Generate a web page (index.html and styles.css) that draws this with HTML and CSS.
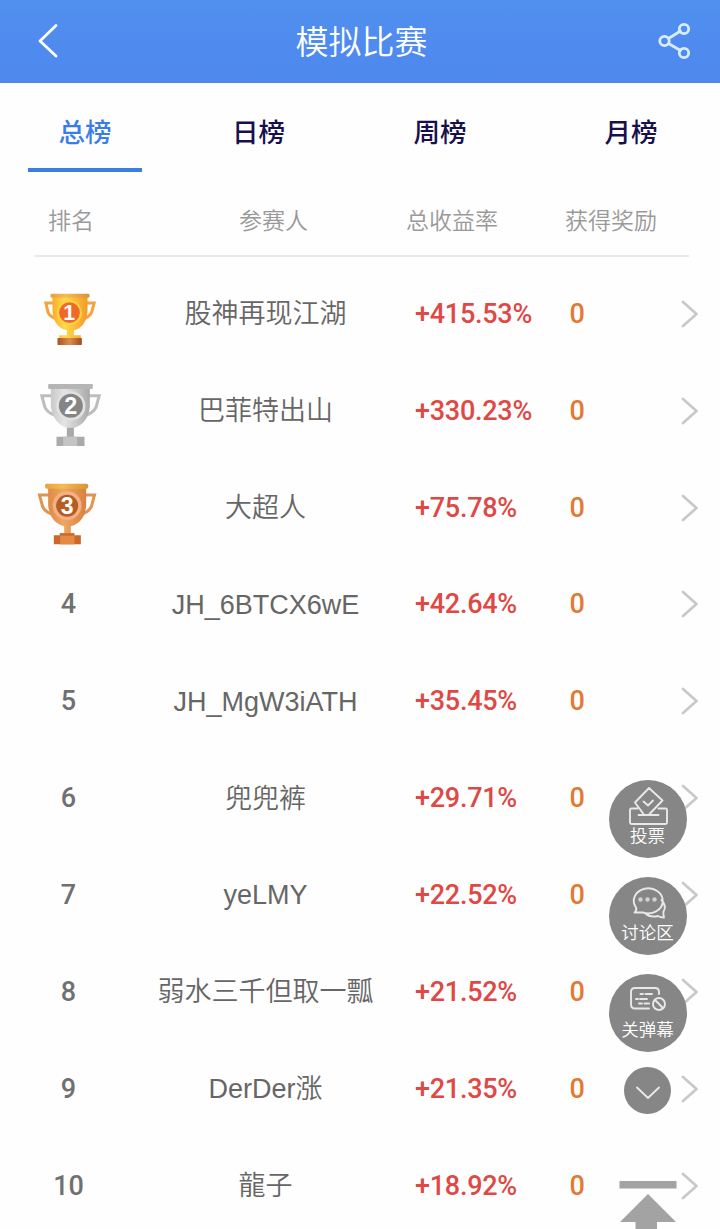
FILE: index.html
```html
<!DOCTYPE html>
<html lang="zh-CN">
<head>
<meta charset="utf-8">
<title>模拟比赛</title>
<link rel="stylesheet" href="styles.css">
</head>
<body>
<svg class="defs" width="0" height="0" aria-hidden="true">
  <defs>
    <linearGradient id="gold" x1="0" x2="1"><stop offset="0" stop-color="#f9ad2b"/><stop offset=".35" stop-color="#ffd94f"/><stop offset="1" stop-color="#f59a25"/></linearGradient>
    <linearGradient id="silver" x1="0" x2="1"><stop offset="0" stop-color="#c9c9c9"/><stop offset=".35" stop-color="#e4e4e4"/><stop offset="1" stop-color="#a9a9a9"/></linearGradient>
    <linearGradient id="bronze" x1="0" x2="1"><stop offset="0" stop-color="#dd8a45"/><stop offset=".4" stop-color="#eea761"/><stop offset="1" stop-color="#d6813f"/></linearGradient>
    <linearGradient id="goldbase" x1="0" x2="1"><stop offset="0" stop-color="#a8541f"/><stop offset=".5" stop-color="#dc8d50"/><stop offset="1" stop-color="#a04a1a"/></linearGradient>
    <linearGradient id="rim" x1="0" x2="1"><stop offset="0" stop-color="#e9a03a"/><stop offset=".4" stop-color="#f3bd52"/><stop offset="1" stop-color="#dc9230"/></linearGradient>
    <symbol id="chevron" viewBox="0 0 18 28"><path d="M2 2 15.500 14 2 26" fill="none" stroke="#c9c9c9" stroke-width="2.800" stroke-linecap="round" stroke-linejoin="round"/></symbol>
  </defs>
</svg>
<div class="page">
  <header class="topbar">
    <svg class="back" width="24" height="36" viewBox="0 0 24 36"><path d="M20 3.500 4 19 20 34" /></svg>
    <h1 class="title">模拟比赛</h1>
    <svg class="share" width="34" height="38" viewBox="0 0 34 38"><path d="M10.500 16.500 22.500 9M10.500 21.500 22.500 28.500"/><circle cx="6.500" cy="19" r="4.700"/><circle cx="26" cy="7" r="4.700"/><circle cx="26" cy="31" r="4.700"/></svg>
  </header>
  <nav class="tabs">
    <a class="tab active">总榜</a><a class="tab">日榜</a><a class="tab">周榜</a><a class="tab">月榜</a>
  </nav>
  <div class="columns"><span class="c-rank">排名</span><span class="c-name">参赛人</span><span class="c-rate">总收益率</span><span class="c-prize">获得奖励</span></div>
  <main class="list">
    <div class="row">
      <span class="rank"><svg width="100" height="90" viewBox="-4.500 -33 300 270">
        <path d="M100 69H76L83 98Q90 113 116 119M198 69H221L213 98Q206 113 181 119" fill="none" stroke="#f3a43a" stroke-width="9"/>
        <path d="M96 46H201V92Q198 141 160 151V166H181V176H116V166H139V151Q99 141 96 92Z" fill="url(#gold)"/>
        <rect x="90" y="41" width="117" height="12" rx="4" fill="url(#rim)"/>
        <circle cx="147" cy="98" r="37" fill="#ffd43e"/><circle cx="147" cy="98" r="31" fill="#ef692d"/>
        <rect x="111" y="174" width="73" height="21" rx="2" fill="url(#goldbase)"/>
        <text class="num" x="146" y="120" font-size="64">1</text></svg></span>
      <span class="name">股神再现江湖</span><span class="rate">+415.53%</span><span class="prize">0</span><svg class="chev"><use href="#chevron"/></svg>
    </div>
    <div class="row">
      <span class="rank"><svg width="100" height="90" viewBox="-4.500 -27 300 270">
        <path d="M96 62H64L73 96Q80 113 104 121M204 62H236L227 96Q219 113 196 121" fill="none" stroke="#bdbdbd" stroke-width="9"/>
        <path d="M91 36H208V94Q204 145 160 159V185H140V159Q98 146 91 94Z" fill="url(#silver)"/>
        <rect x="83" y="27" width="134" height="15" rx="4" fill="#b5b5b5"/>
        <circle cx="151" cy="93" r="44" fill="#e1e0e2"/><circle cx="151" cy="92" r="36" fill="#858585"/>
        <path d="M139 158H160V185H192V213H108V185H139Z" fill="#aaa"/><rect x="128" y="185" width="42" height="28" fill="#c4c4c4"/>
        <text class="num" x="151" y="117" font-size="70">2</text></svg></span>
      <span class="name">巴菲特出山</span><span class="rate">+330.23%</span><span class="prize">0</span><svg class="chev"><use href="#chevron"/></svg>
    </div>
    <div class="row">
      <span class="rank"><svg width="100" height="90" viewBox="-4.500 -22 300 270">
        <path d="M88 74H57L66 108Q73 125 98 133M190 74H222L213 108Q205 125 181 133" fill="none" stroke="#df944f" stroke-width="9"/>
        <path d="M83 47H197V105Q193 156 151 168V188H162V197H118V188H131V168Q88 156 83 105Z" fill="url(#bronze)"/>
        <rect x="74" y="40" width="129" height="15" rx="5" fill="url(#rim)"/>
        <circle cx="140" cy="106" r="43" fill="#f7b086"/><circle cx="140" cy="106" r="33" fill="#b65d24"/>
        <path d="M118 189H161V195H181V222H100V195H118Z" fill="#c9692b"/><rect x="119" y="196" width="43" height="26" fill="#e38a45"/>
        <text class="num" x="140" y="130" font-size="69">3</text></svg></span>
      <span class="name">大超人</span><span class="rate">+75.78%</span><span class="prize">0</span><svg class="chev"><use href="#chevron"/></svg>
    </div>
    <div class="row"><span class="rank">4</span><span class="name">JH_6BTCX6wE</span><span class="rate">+42.64%</span><span class="prize">0</span><svg class="chev"><use href="#chevron"/></svg></div>
    <div class="row"><span class="rank">5</span><span class="name">JH_MgW3iATH</span><span class="rate">+35.45%</span><span class="prize">0</span><svg class="chev"><use href="#chevron"/></svg></div>
    <div class="row"><span class="rank">6</span><span class="name">兜兜裤</span><span class="rate">+29.71%</span><span class="prize">0</span><svg class="chev"><use href="#chevron"/></svg></div>
    <div class="row"><span class="rank">7</span><span class="name">yeLMY</span><span class="rate">+22.52%</span><span class="prize">0</span><svg class="chev"><use href="#chevron"/></svg></div>
    <div class="row"><span class="rank">8</span><span class="name">弱水三千但取一瓢</span><span class="rate">+21.52%</span><span class="prize">0</span><svg class="chev"><use href="#chevron"/></svg></div>
    <div class="row"><span class="rank">9</span><span class="name">DerDer涨</span><span class="rate">+21.35%</span><span class="prize">0</span><svg class="chev"><use href="#chevron"/></svg></div>
    <div class="row"><span class="rank">10</span><span class="name">龍子</span><span class="rate">+18.92%</span><span class="prize">0</span><svg class="chev"><use href="#chevron"/></svg></div>
  </main>
  <aside class="floaters">
    <button class="bubble">
      <svg width="42" height="40" viewBox="0 0 42 40"><path d="M10.500 25.500H4.500Q3 25.500 3 27V39.500Q3 41 4.500 41H38.500Q40 41 40 39.500V27Q40 25.500 38.500 25.500H31.500M11.500 32H31.500M16.500 31 8 19.500 22 5 35.500 17.500 22.500 31M16.500 18.500 21 22.500 26 17.500"/></svg>
      <span>投票</span></button>
    <button class="bubble">
      <svg width="42" height="40" viewBox="0 0 42 40"><path d="M7.500 32.500Q10 31 9 27.500A14.500 12.500 0 1 1 16 32.500H7.500ZM34.500 20Q40 26 36.500 31.500Q36 33.500 37 37.500Q33 37.500 31 36Q23 38 18 33"/><g class="dots"><circle cx="13.500" cy="19.500" r="2.200"/><circle cx="20.500" cy="19.500" r="2.200"/><circle cx="27.500" cy="19.500" r="2.200"/></g></svg>
      <span>讨论区</span></button>
    <button class="bubble">
      <svg width="42" height="40" viewBox="0 0 42 40"><path d="M22 31.500H8Q4 31.500 4 27.500V15Q4 11 8 11H28Q32 11 32 15V17M13.500 17H16M18.500 17H25M9 22H11M13 22H20M12 26.500H15M17.500 26.500H22"/><circle cx="32" cy="27" r="6"/><path d="M28 23 36 31"/></svg>
      <span>关弹幕</span></button>
    <button class="collapse"><svg width="26" height="16" viewBox="0 0 26 16"><path d="M2 2.500 13 13 24 2.500"/></svg></button>
    <svg class="to-top" width="58" height="60" viewBox="0 0 58 60"><path d="M.5 0H57.500V7.500H.5ZM29 13 57 41H38V60H16.500V41H1Z"/></svg>
  </aside>
</div>
</body>
</html>
```
FILE: styles.css
```css
* { box-sizing: border-box; }
html, body { margin: 0; height: 1229px; overflow: hidden; background: #fefefe; }
body { font-family: "Liberation Sans", "Noto Sans CJK SC", sans-serif; }
.defs { position: absolute; }
.page { position: relative; width: 720px; height: 1229px; overflow: hidden; }

.topbar {
  display: grid;
  grid-template-columns: 60px 1fr 60px;
  align-items: center;
  height: 82.500px;
  background: linear-gradient(#5090ee, #4e87ee);
}
.topbar svg { fill: none; stroke: #fff; stroke-width: 2.800; stroke-linecap: round; stroke-linejoin: round; }
.back { margin-left: 36px; margin-bottom: 3px; }
.topbar .share { stroke: #d9ecff; stroke-width: 2.800; margin-left: -2px; margin-bottom: 1px; }
.title {
  margin: 0 0 3px 3px;
  text-align: center;
  color: #fff;
  font: 350 33px/48px "Noto Sans CJK SC", sans-serif;
}

.tabs {
  display: grid;
  grid-template-columns: 173.500px 181.500px 191px 114px;
  height: 89.500px;
  padding-left: 28px;
}
.tab {
  width: 114px;
  height: 89.500px;
  border-bottom: 4px solid transparent;
  text-align: center;
  color: #17104c;
  font: 500 26.500px/96px "Noto Sans CJK SC", sans-serif;
}
.tab.active { color: #3b7de6; border-color: #3b7de0; }

.columns {
  display: grid;
  grid-template-columns: 191px 167px 159px 1fr;
  height: 85px;
  margin: 0 31px 0 35px;
  padding-left: 13px;
  border-bottom: 2px solid #e9e9e9;
  color: #999;
  font: 350 23px/94px "Noto Sans CJK SC", sans-serif;
}

.list { padding-top: 8.500px; }
.row {
  display: grid;
  grid-template-columns: 100px 294px 157px 1fr 18px;
  align-items: center;
  height: 96.850px;
  padding: 0 21.500px 0 18.500px;
  color: #666;
}
.rank, .rate, .prize { font: 500 27px/40px Roboto, sans-serif; }
.rank { display: flex; justify-content: center; color: #707070; }
.name {
  padding-top: 1px;
  text-align: center;
  font: 350 27px/40px "Liberation Sans", "Noto Sans CJK SC", sans-serif;
  white-space: nowrap;
}
.rate { padding-left: 2.500px; color: #df4844; letter-spacing: -.25px; }
.prize { color: #e27a35; }
.chev { width: 18px; height: 28px; }
.num { fill: #fff; text-anchor: middle; font-family: "Liberation Sans", sans-serif; font-weight: 700; }

.floaters {
  position: absolute;
  top: 780px;
  left: 608.500px;
  display: flex;
  flex-direction: column;
  align-items: center;
  width: 78px;
}
.floaters button { padding: 0; border: 0; border-radius: 50%; background: #868686; color: #fff; }
.bubble {
  display: flex;
  flex-direction: column;
  align-items: center;
  width: 78px;
  height: 78px;
  margin-bottom: 19px;
  font: 350 17.500px/24px "Noto Sans CJK SC", sans-serif;
}
.bubble svg { margin-top: 3px; flex: none; overflow: visible; }
.floaters button svg { fill: none; stroke: #e8e8e8; stroke-width: 1.900; stroke-linecap: round; stroke-linejoin: round; }
.floaters button .dots { fill: #d2d2d2; stroke: none; }
.collapse { display: grid; place-items: center; width: 47px; height: 47px; margin-top: -4px; }
.collapse svg { margin-top: 5px; }
.to-top { margin-top: 67px; fill: #a3a3a3; }
```
